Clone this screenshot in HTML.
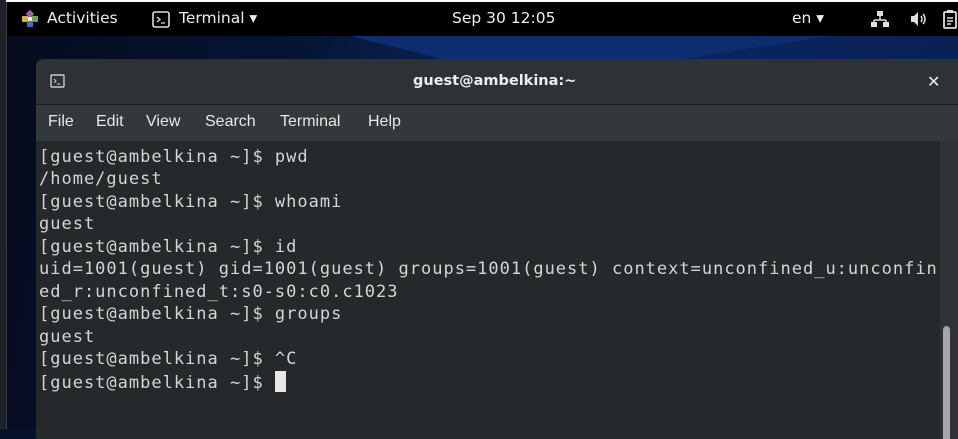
<!DOCTYPE html>
<html><head><style>
*{margin:0;padding:0;box-sizing:border-box}
body{width:958px;height:429px;overflow:hidden;position:relative;background:#06112a;font-family:"Liberation Sans","DejaVu Sans",sans-serif}
.bg{position:absolute;left:0;top:0;width:958px;height:429px;background:linear-gradient(100deg,#050b1c 0%,#061535 30%,#0b2a66 55%,#0a2460 70%,#092050 100%)}
.wedge{position:absolute;left:350px;top:36px;width:480px;height:24px;background:#0d2d70;clip-path:polygon(0 0,100% 0,68% 100%,20% 100%)}
.strip{position:absolute;left:0;top:0;width:7px;height:429px;background:#1d2128;border-right:1px solid #3a3d42}
.white{position:absolute;left:6px;top:0;width:952px;height:2px;background:#fff}
.top{position:absolute;left:7px;top:2px;width:951px;height:34px;background:#000;color:#eee;font-size:15.5px;font-family:"DejaVu Sans",sans-serif}
.top span{position:absolute;top:7px}
.win{position:absolute;left:36px;top:59px;width:930px;height:380px;background:#2d3133;border-radius:7px 7px 0 0;overflow:hidden}
.title{height:46px;background:#2e3234;border-bottom:1px solid #1c1f20;position:relative;color:#eee;font-size:14.5px;font-weight:bold;font-family:"DejaVu Sans",sans-serif}
.menu{height:36px;background:#33383a;color:#e8e8e8;font-size:16px;position:relative}
.menu span{position:absolute;top:8px}
.term{position:absolute;left:0;top:82px;width:904px;height:300px;background:#26292b}
.sb{position:absolute;left:904px;top:82px;width:26px;height:300px;background:#2f3335}
.thumb{position:absolute;left:907px;top:267px;width:7px;height:120px;background:#a6a6a6;border-radius:4px}
pre{position:absolute;left:3px;top:5px;font-family:"DejaVu Sans Mono","Liberation Mono",monospace;font-size:17px;letter-spacing:1.0px;line-height:22.45px;color:#d3d7cf}
.cur{display:inline-block;width:11px;height:21px;background:#e8e8e8;vertical-align:-4px}
</style></head><body>
<div class="bg"></div><div class="wedge"></div>
<div class="strip"></div>
<div class="top">
 <svg style="position:absolute;left:14px;top:8px" width="18" height="18" viewBox="0 0 18 18"><rect x="6" y="1" width="6" height="6" fill="#a060b0" transform="rotate(45 9 4)"/><rect x="1" y="6" width="6" height="6" fill="#d0b040"/><rect x="11" y="6" width="6" height="6" fill="#70a050"/><rect x="6" y="11" width="6" height="6" fill="#4070b0"/><rect x="7" y="7" width="4" height="4" fill="#eee"/></svg>
 <span style="left:40px">Activities</span>
 <svg style="position:absolute;left:145px;top:9px" width="18" height="17"><rect x="1" y="1" width="16" height="15" rx="2" fill="none" stroke="#ddd" stroke-width="1.6"/><path d="M5 6l3 2.5-3 2.5M9 12h4" stroke="#ddd" stroke-width="1.3" fill="none"/></svg>
 <span style="left:172px">Terminal ▾</span>
 <span style="left:445px">Sep 30 12:05</span>
 <span style="left:785px">en ▾</span>
 <svg style="position:absolute;left:864px;top:8px" width="18" height="18"><rect x="6" y="1" width="6" height="5" fill="#ddd"/><path d="M9 6v4M3 10h12M3 10v3M15 10v3" stroke="#ddd" stroke-width="1.5" fill="none"/><rect x="0" y="12" width="6" height="5" fill="#ddd"/><rect x="12" y="12" width="6" height="5" fill="#ddd"/></svg>
 <svg style="position:absolute;left:903px;top:9px" width="18" height="16"><path d="M1 5h3l4-4v14l-4-4H1z" fill="#ddd"/><path d="M11 5q2 3 0 6M13 3q4 5 0 10" stroke="#ddd" stroke-width="1.5" fill="none"/></svg>
 <svg style="position:absolute;left:936px;top:7px" width="15" height="20"><rect x="1" y="3" width="12" height="16" rx="1" fill="none" stroke="#ddd" stroke-width="1.8"/><rect x="4" y="1" width="6" height="3" fill="#ddd"/><path d="M4 9h6M4 12h6M4 15h4" stroke="#ddd" stroke-width="1.5"/></svg>
</div>
<div class="win">
 <div class="title">
  <svg style="position:absolute;left:14px;top:15px" width="15" height="14"><rect x="1" y="1" width="13" height="12" rx="1" fill="none" stroke="#ccc" stroke-width="1.4"/><path d="M4 5l2 2-2 2M7 10h3" stroke="#ccc" stroke-width="1" fill="none"/></svg>
  <span style="position:absolute;left:377px;top:14px">guest@ambelkina:~</span>
  <span style="position:absolute;left:891px;top:13px;font-size:16px">✕</span>
 </div>
 <div class="menu">
  <span style="left:12px">File</span><span style="left:60px">Edit</span><span style="left:110px">View</span><span style="left:169px">Search</span><span style="left:244px">Terminal</span><span style="left:332px">Help</span>
 </div>
 <div class="term"><pre>[guest@ambelkina ~]$ pwd
/home/guest
[guest@ambelkina ~]$ whoami
guest
[guest@ambelkina ~]$ id
uid=1001(guest) gid=1001(guest) groups=1001(guest) context=unconfined_u:unconfin
ed_r:unconfined_t:s0-s0:c0.c1023
[guest@ambelkina ~]$ groups
guest
[guest@ambelkina ~]$ ^C
[guest@ambelkina ~]$ <span class="cur"></span></pre></div>
 <div class="sb"></div><div class="thumb"></div>
</div>
<div class="white"></div>
</body></html>
